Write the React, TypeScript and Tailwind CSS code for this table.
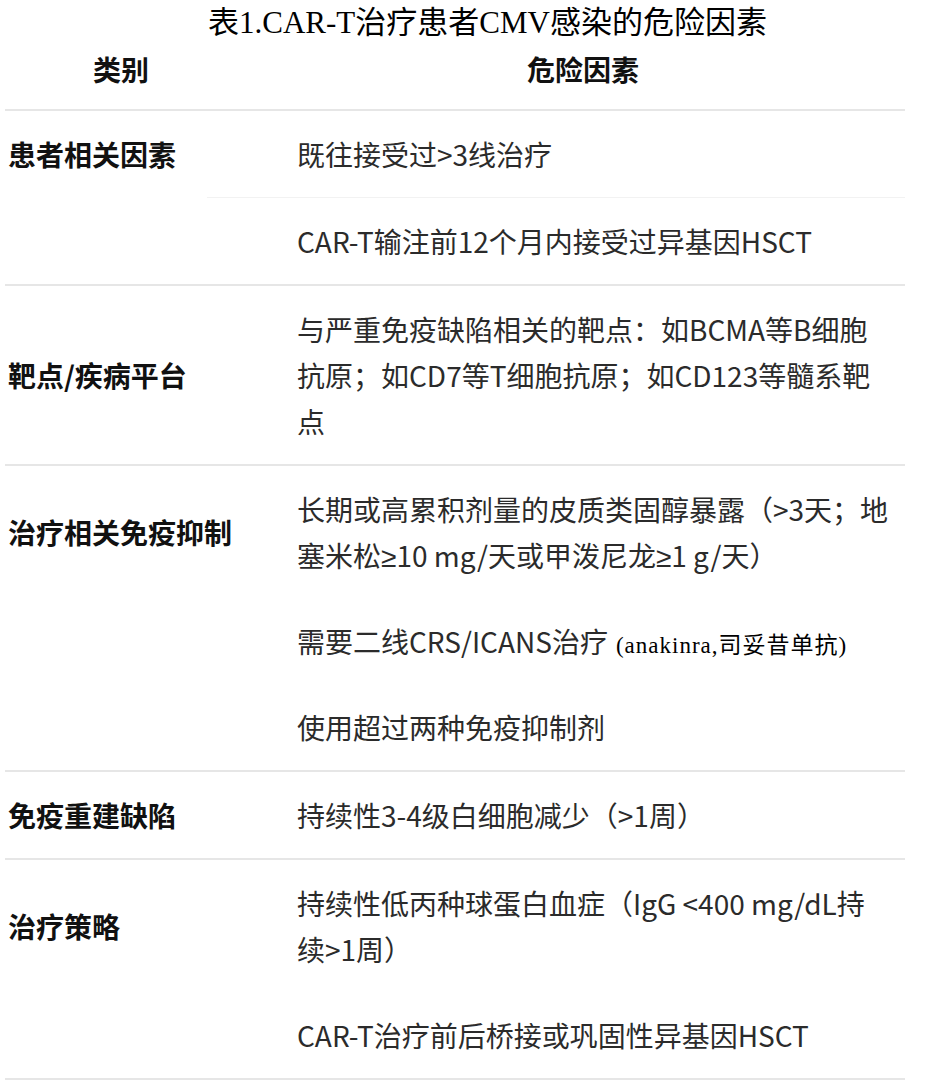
const sans = "font-['Noto_Sans_CJK_SC','Noto_Sans',sans-serif]";

type Row = {
  label: string;
  items: React.ReactNode[];
  split?: boolean;
};

// narrow ≥ like the reference (CJK font gives a full-width one)
const Ge = () => <span className="font-['Noto_Sans',sans-serif] leading-none">≥</span>;

const rows: Row[] = [
  {
    label: "患者相关因素",
    items: ["既往接受过>3线治疗", "CAR-T输注前12个月内接受过异基因HSCT"],
    split: true,
  },
  {
    label: "靶点/疾病平台",
    items: [
      <>
        与严重免疫缺陷相关的靶点：如BCMA等B细胞
        <br />
        抗原；如CD7等T细胞抗原；如CD123等髓系靶
        <br />点
      </>,
    ],
  },
  {
    label: "治疗相关免疫抑制",
    items: [
      <>
        长期或高累积剂量的皮质类固醇暴露（&gt;3天；地
        <br />
        塞米松<Ge />10 mg/天或甲泼尼龙<Ge />1 g/天）
      </>,
      <>
        需要二线CRS/ICANS治疗
        <span className="ml-[8px] font-['Liberation_Serif','Noto_Sans_CJK_SC',serif] text-[23px] leading-none tracking-[1px] text-black">
          (anakinra,司妥昔单抗)
        </span>
      </>,
      "使用超过两种免疫抑制剂",
    ],
  },
  {
    label: "免疫重建缺陷",
    items: ["持续性3-4级白细胞减少（>1周）"],
  },
  {
    label: "治疗策略",
    items: [
      <>
        持续性低丙种球蛋白血症（IgG &lt;400 mg/dL持
        <br />
        续&gt;1周）
      </>,
      "CAR-T治疗前后桥接或巩固性异基因HSCT",
    ],
  },
];

export default function App() {
  return (
    <div className="w-[935px] min-h-[1080px] bg-white">
      {/* Title */}
      <h1 className="h-[46px] pl-[40px] text-center font-['Liberation_Serif','Noto_Sans_CJK_SC',serif] text-[31px] leading-[46px] font-normal text-black">
        表1.CAR-T治疗患者CMV感染的危险因素
      </h1>

      <div className={`ml-[5px] w-[900px] ${sans}`}>
        {/* Header */}
        <div className="flex pb-[17px] text-[28px] leading-[46px] font-bold text-[#111]">
          <div className="w-[292px] pl-[88px]">类别</div>
          <div className="pl-[230px]">危险因素</div>
        </div>

        {/* Body: label sits level with the first item */}
        {rows.map((row) => (
          <div key={row.label} className="grid grid-cols-[202px_1fr] border-t-[2px] border-[#e6e6e6]">
            <div className="col-start-1 row-start-1 self-center whitespace-nowrap pl-[3px] text-[28px] leading-[46px] font-bold text-[#111]">
              {row.label}
            </div>
            {row.items.map((item, i) => (
              <div
                key={i}
                className={`col-start-2 whitespace-nowrap py-[20px] pl-[90px] text-[28px] leading-[46px] text-[#2b2b2b] ${
                  row.split && i > 0 ? "border-t border-[#f2f2f2]" : ""
                }`}
              >
                {item}
              </div>
            ))}
          </div>
        ))}
        <div className="border-t-[2px] border-[#e6e6e6]" />
      </div>
    </div>
  );
}
